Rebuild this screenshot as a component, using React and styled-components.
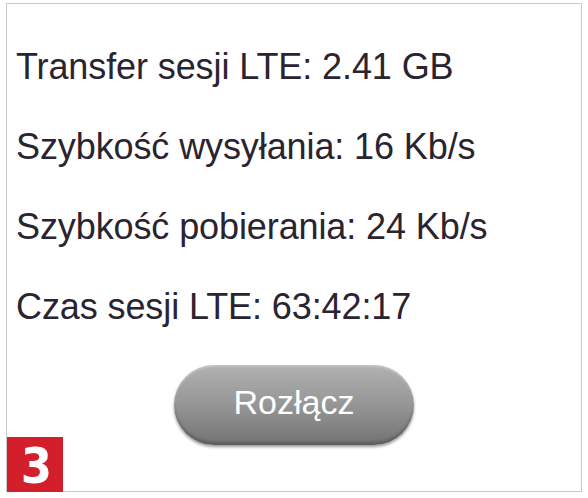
import React from 'react';
import styled, { createGlobalStyle } from 'styled-components';

const GlobalStyle = createGlobalStyle`
  html, body {
    margin: 0;
    padding: 0;
    background: #ffffff;
  }
  body {
    font-family: "Liberation Sans", Arial, sans-serif;
  }
`;

const Page = styled.div`
  width: 588px;
  height: 498px;
  padding: 3px 6px 6px 6px;
  box-sizing: border-box;
`;

const Panel = styled.div`
  position: relative;
  height: 100%;
  box-sizing: border-box;
  border: 1px solid #c9c9c9;
  display: flex;
  flex-direction: column;
  padding: 23px 0 0 9px;
`;

const StatLine = styled.div`
  font-size: 36px;
  line-height: 80px;
  color: #2a2430;
  white-space: nowrap;
  letter-spacing: -0.1px;
`;

const ButtonRow = styled.div`
  display: flex;
  justify-content: center;
  margin-top: 18px;
  padding-right: 9px;
`;

const DisconnectButton = styled.button`
  width: 240px;
  height: 80px;
  border-radius: 40px;
  border: none;
  background: linear-gradient(to bottom, #b1b1b1 0%, #969696 50%, #727272 100%);
  box-shadow: 0 2px 3px rgba(0, 0, 0, 0.4), inset 0 -3px 3px rgba(0, 0, 0, 0.2),
    inset 0 2px 2px rgba(255, 255, 255, 0.25);
  color: #ffffff;
  font-family: "Liberation Sans", Arial, sans-serif;
  font-size: 34px;
  padding: 0 0 6px 0;
  cursor: pointer;
`;

const Badge = styled.div`
  position: absolute;
  left: 0;
  bottom: -1px;
  width: 56px;
  height: 55px;
  background: #d21f2b;
  color: #ffffff;
  font-family: "Liberation Sans Narrow", "DejaVu Sans Condensed", sans-serif;
  font-weight: bold;
  font-size: 50px;
  line-height: 58px;
  text-align: center;
  padding-left: 3px;
  box-sizing: border-box;
`;

const stats = [
  'Transfer sesji LTE: 2.41 GB',
  'Szybkość wysyłania: 16 Kb/s',
  'Szybkość pobierania: 24 Kb/s',
  'Czas sesji LTE: 63:42:17',
];

export default function App() {
  return (
    <Page>
      <GlobalStyle />
      <Panel>
        {stats.map((s) => (
          <StatLine key={s}>{s}</StatLine>
        ))}
        <ButtonRow>
          <DisconnectButton>Rozłącz</DisconnectButton>
        </ButtonRow>
        <Badge>3</Badge>
      </Panel>
    </Page>
  );
}
